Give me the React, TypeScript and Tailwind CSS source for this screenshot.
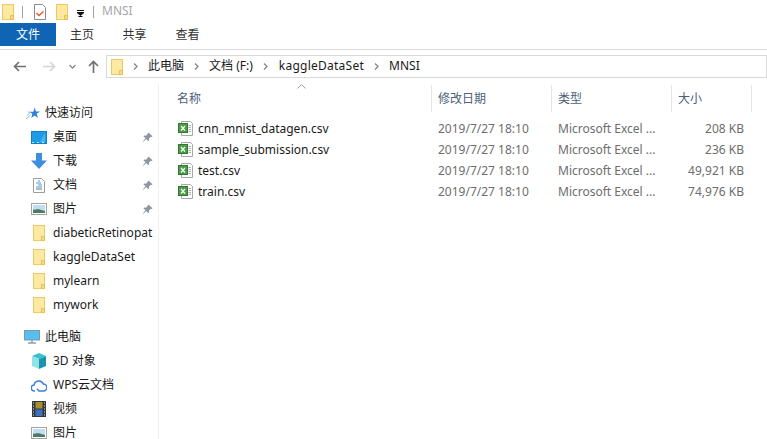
import React from 'react';

const FONT = 'font-["Noto_Sans","Noto_Sans_CJK_SC",sans-serif]';

const Folder = ({ className = '' }: { className?: string }) => (
  <svg viewBox="0 0 12 16" className={className}>
    <rect x=".5" y=".5" width="11" height="15" fill="#fde9a2" stroke="#ecca62" />
    <path d="M8.500 15.500v-4h3v4z" fill="#fbdc7c" stroke="#e6c050" />
  </svg>
);

const Pin = () => (
  <svg viewBox="0 0 12 12" className="w-[11px] h-[11px] shrink-0">
    <path d="M7 .5l4.500 4.200-1 .8-.9-.3-2 2.200.2 1.800-.9.8-2.200-2.300L1 11l-.3-.3 3-3.800L1.600 4.700l.8-.9 1.800.2 2.200-2-.2-.9z" fill="#8f979f" />
  </svg>
);

const ExcelIcon = () => (
  <svg viewBox="0 0 15 15" className="w-[15px] h-[15px] shrink-0">
    <path d="M3.500.5h9l2 2v12h-11z" fill="#fff" stroke="#a8a8a8" />
    <path d="M10.500 4.500h2.500M10.500 6.500h2.500M10.500 8.500h2.500M10.500 10.500h2.500" stroke="#b0b0b0" />
    <rect x=".5" y="2.500" width="9" height="9" fill="#4f9a45" stroke="#2f7a2f" />
    <path d="M3 5l4 4.500M7 5l-4 4.500" stroke="#fff" strokeWidth="1.2" />
  </svg>
);

const PictureIcon = () => (
  <svg viewBox="0 0 16 12" className="w-4 h-3">
    <rect x=".5" y=".5" width="15" height="11" fill="#fff" stroke="#a3a3a3" />
    <rect x="2" y="2" width="12" height="8" fill="#c4dcef" />
    <path d="M2 7l5-1 7 2v2H2z" fill="#4d7a66" />
  </svg>
);

const Row = ({ icon, label, pin }: { icon: React.ReactNode; label: string; pin?: boolean }) => (
  <div className="h-6 flex items-center text-[12px] text-[#1a1a1a] whitespace-nowrap">
    <div className="w-[53px] shrink-0 flex justify-center pl-[27px] pr-[2px]">{icon}</div>
    <span className="flex-1">{label}</span>
    {pin && <div className="pr-[5px]"><Pin /></div>}
  </div>
);

const FolderRow = ({ label }: { label: string }) => <Row icon={<Folder className="w-3 h-4" />} label={label} />;

const Sidebar = () => (
  <div className="w-[159px] shrink-0 border-r border-[#eef0f2] pt-[17px] overflow-hidden">
    <div className="h-6 flex items-center text-[12px] text-[#1a1a1a]">
      <svg viewBox="0 0 16 14" className="w-[14px] h-[13px] ml-[26px] mr-[5px]">
        <path d="M10 0l1.400 4.600H16l-3.700 2.800 1.300 4.600L10 9.200 6 12l1.300-4.600L4 5h4.500z" fill="#2f7fd2" />
        <path d="M0 13l5-4M1 9l3-2M2 5l3 1" stroke="#7fb6e8" />
      </svg>
      快速访问
    </div>
    <Row
      label="桌面"
      pin
      icon={
        <svg viewBox="0 0 16 13" className="w-4 h-[13px]">
          <rect width="16" height="13" fill="#1e9ae6" />
          <rect x=".5" y=".5" width="15" height="12" fill="none" stroke="#0f7fcc" />
          <path d="M9 11l5-9v9z" fill="#48b4f2" />
          <path d="M1 11.500h14" stroke="#cfe9fa" strokeDasharray="2 3" />
        </svg>
      }
    />
    <Row
      label="下载"
      pin
      icon={
        <svg viewBox="0 0 16 16" className="w-4 h-4">
          <path d="M5 0h6v7.500h5L8 16 0 7.500h5z" fill="#3f8ede" />
        </svg>
      }
    />
    <Row
      label="文档"
      pin
      icon={
        <svg viewBox="0 0 12 15" className="w-3 h-[15px]">
          <path d="M.5.500h8l3 3v11H.5z" fill="#fff" stroke="#9c9c9c" />
          <path d="M5 3h2M3 5h5M5 7h4M3 9h6" stroke="#4d9ae0" />
          <path d="M3 11h6" stroke="#5f7f70" />
        </svg>
      }
    />
    <Row label="图片" pin icon={<PictureIcon />} />
    <FolderRow label="diabeticRetinopat" />
    <FolderRow label="kaggleDataSet" />
    <FolderRow label="mylearn" />
    <FolderRow label="mywork" />
    <div className="h-6 mt-2 flex items-center text-[12px] text-[#1a1a1a]">
      <svg viewBox="0 0 16 14" className="w-4 h-[14px] ml-6 mr-[5px]">
        <rect x=".5" y=".5" width="15" height="9.500" fill="#58c0f0" stroke="#7d98aa" />
        <path d="M4 13h8M8 10v3" stroke="#8aa0ae" strokeWidth="1.400" />
      </svg>
      此电脑
    </div>
    <Row
      label="3D 对象"
      icon={
        <svg viewBox="0 0 16 16" className="w-4 h-4">
          <path d="M8 0l7 3-7 3-7-3z" fill="#3cc0cc" />
          <path d="M1 3l7 3v10l-7-3z" fill="#8fe4ea" />
          <path d="M15 3L8 6v10l7-3z" fill="#1c93ad" />
        </svg>
      }
    />
    <Row
      label="WPS云文档"
      icon={
        <svg viewBox="0 0 16 13" className="w-4 h-[13px]" fill="none">
          <path d="M4 12H3.500a3 3 0 0 1-.4-6A4.800 4.800 0 0 1 12.300 5a3.500 3.500 0 0 1 .2 7H8L6 9.800" stroke="#3d7de4" strokeWidth="1.500" />
        </svg>
      }
    />
    <Row
      label="视频"
      icon={
        <svg viewBox="0 0 14 16" className="w-[14px] h-4">
          <rect width="14" height="16" fill="#33383c" />
          <path d="M1 2h1M1 5h1M1 8h1M1 11h1M1 14h1M12 2h1M12 5h1M12 8h1M12 11h1M12 14h1" stroke="#ddd" />
          <rect x="3.500" y="1" width="7" height="6.500" fill="#a98f2c" />
          <rect x="3.500" y="8.500" width="7" height="6.500" fill="#3e6fc0" />
        </svg>
      }
    />
    <Row label="图片" icon={<PictureIcon />} />
  </div>
);

const cols = 'grid grid-cols-[261px_120px_120px_80px]';

const files = [
  { name: 'cnn_mnist_datagen.csv', size: '208 KB' },
  { name: 'sample_submission.csv', size: '236 KB' },
  { name: 'test.csv', size: '49,921 KB' },
  { name: 'train.csv', size: '74,976 KB' },
];

const Head = ({ label }: { label: string }) => (
  <div className="h-[27px] flex items-center pl-[6px] border-r border-[#e5e5e5] text-[12px] text-[#4c607a]">
    {label}
  </div>
);

const FileList = () => (
  <div className="flex-1 min-w-0 relative">
    <svg viewBox="0 0 9 5" className="absolute left-[138px] top-0 w-[9px] h-[5px]" fill="none">
      <path d="M.5 4.500l4-4 4 4" stroke="#a0a0a0" />
    </svg>
    <div className={`${cols} pl-3 pt-[1px]`}>
      <Head label="名称" />
      <Head label="修改日期" />
      <Head label="类型" />
      <Head label="大小" />
    </div>
    <div className="pt-[6px]">
      {files.map(f => (
        <div key={f.name} className={`${cols} pl-3 h-[21px] items-center text-[12px] text-[#6d6d6d] whitespace-nowrap`}>
          <div className="flex items-center gap-[5px] pl-[7px] text-[#1a1a1a]">
            <ExcelIcon />
            {f.name}
          </div>
          <div className="pl-[6px]">2019/7/27 18:10</div>
          <div className="pl-[6px]">Microsoft Excel ...</div>
          <div className="text-right pr-[8px]">{f.size}</div>
        </div>
      ))}
    </div>
  </div>
);

const Chevron = () => (
  <svg viewBox="0 0 5 7" className="w-[5px] h-[7px] mx-[10px] shrink-0" fill="none">
    <path d="M1 .5L4 3.500 1 6.500" stroke="#8a8a8a" strokeWidth="1.400" />
  </svg>
);

export default function App() {
  return (
    <div className={`w-[767px] h-[439px] overflow-hidden bg-white flex flex-col ${FONT}`}>
      <div className="h-[23px] flex items-center pl-[2px] shrink-0">
        <Folder className="w-3 h-4" />
        <div className="w-px h-[12px] bg-[#a0a0a0] ml-[8px] mr-[11px]" />
        <svg viewBox="0 0 12 16" className="w-3 h-4" fill="none">
          <path d="M.5.500h8l3 3v12H.5z" fill="#fff" stroke="#8a8a8a" />
          <path d="M2.500 9l2.500 2.500L9.500 7.500" stroke="#e4572e" strokeWidth="1.400" />
        </svg>
        <Folder className="w-3 h-4 ml-[10px]" />
        <svg viewBox="0 0 7 7" className="w-[7px] h-[7px] ml-[9px] mt-[3px]">
          <path d="M0 .5h7M0 2.500h7L3.500 5.500z M1.500 6.500h4" stroke="#111" strokeWidth="1" fill="#111" />
        </svg>
        <div className="w-px h-[12px] bg-[#a0a0a0] ml-[9px] mr-[8px]" />
        <span className="text-[12px] leading-[12px] -mt-[1px] text-[#a6a6a6]">MNSI</span>
      </div>
      <div className="h-[23px] flex items-stretch text-[12px] text-[#333] shrink-0">
        <div className="w-14 bg-[#0f65b4] text-white flex items-center justify-center">文件</div>
        <div className="w-[52px] flex items-center justify-center">主页</div>
        <div className="w-[53px] flex items-center justify-center">共享</div>
        <div className="w-[53px] flex items-center justify-center">查看</div>
      </div>
      <div className="h-[6px] border-t border-[#dadbdc] mt-[3px] shrink-0" />
      <div className="h-[23px] flex items-center shrink-0">
        <svg viewBox="0 0 13 11" className="w-[13px] h-[11px] ml-[13px]" fill="none">
          <path d="M6 1L1.500 5.500 6 10M2 5.500h11" stroke="#707070" strokeWidth="1.600" />
        </svg>
        <svg viewBox="0 0 13 11" className="w-[13px] h-[11px] ml-[17px]" fill="none">
          <path d="M7 1l4.500 4.500L7 10M11 5.500H0" stroke="#d4d4d4" strokeWidth="1.600" />
        </svg>
        <svg viewBox="0 0 7 5" className="w-[7px] h-[5px] ml-[13px]" fill="none">
          <path d="M.5 1l3 3 3-3" stroke="#8a8a8a" strokeWidth="1.300" />
        </svg>
        <svg viewBox="0 0 11 13" className="w-[11px] h-[13px] ml-[12px]" fill="none">
          <path d="M1 6l4.500-4.500L10 6M5.500 2v11" stroke="#707070" strokeWidth="1.700" />
        </svg>
        <div className="flex-1 h-[23px] ml-[7px] border border-[#d9d9d9] flex items-center pl-1 pb-[1px] text-[12px] text-[#1a1a1a] whitespace-nowrap">
          <Folder className="w-3 h-4 mt-[1px]" />
          <Chevron />
          此电脑
          <Chevron />
          文档 (F:)
          <Chevron />
          <span className="tracking-[0.25px] ml-[1px]">kaggleDataSet</span>
          <Chevron />
          MNSI
        </div>
      </div>
      <div className="flex-1 flex min-h-0 mt-[6px]">
        <Sidebar />
        <FileList />
      </div>
    </div>
  );
}
